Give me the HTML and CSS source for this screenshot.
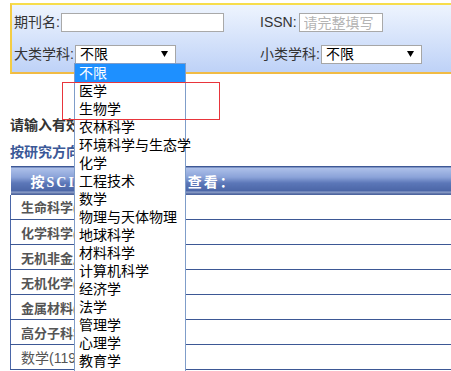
FILE: index.html
```html
<!DOCTYPE html>
<html lang="zh-CN">
<head>
    <meta charset="UTF-8" />
    <title>期刊查询</title>
    <link rel="stylesheet" href="styles.css">
</head>

<body>
    <main class="page">

        <section class="search-box">
            <div class="search-row">
                <div class="field field-wide">
                    <label>期刊名:</label>
                    <input type="text" class="txt txt-name" />
                </div>
                <div class="field">
                    <label>ISSN:</label>
                    <input type="text" class="txt txt-issn" placeholder="请完整填写" />
                </div>
            </div>
            <div class="search-row">
                <div class="field field-wide">
                    <label>大类学科:</label>
                    <div class="sel">
                        <span>不限</span>
                        <svg width="7" height="6" viewBox="0 0 7 6"><path d="M0 0h7L3.5 6z" fill="#000"/></svg>
                    </div>
                </div>
                <div class="field">
                    <label>小类学科:</label>
                    <div class="sel">
                        <span>不限</span>
                        <svg width="7" height="6" viewBox="0 0 7 6"><path d="M0 0h7L3.5 6z" fill="#000"/></svg>
                    </div>
                </div>
            </div>
        </section>

        <p class="tip">请输入有效期刊名</p>
        <p class="sub-title">按研究方向浏览</p>

        <table class="cat-table">
            <tr><th>按SCI学科类别分区表查看：</th></tr>
            <tr><td>生命科学(1520)</td></tr>
            <tr><td>化学科学(1340)</td></tr>
            <tr><td>无机非金属材料(312)</td></tr>
            <tr><td>无机化学(118)</td></tr>
            <tr><td>金属材料(205)</td></tr>
            <tr><td>高分子科学(167)</td></tr>
            <tr><td class="plain">数学(119)</td></tr>
        </table>

        <ul class="dropdown">
            <li class="on">不限</li>
            <li>医学</li>
            <li>生物学</li>
            <li>农林科学</li>
            <li>环境科学与生态学</li>
            <li>化学</li>
            <li>工程技术</li>
            <li>数学</li>
            <li>物理与天体物理</li>
            <li>地球科学</li>
            <li>材料科学</li>
            <li>计算机科学</li>
            <li>经济学</li>
            <li>法学</li>
            <li>管理学</li>
            <li>心理学</li>
            <li>教育学</li>
        </ul>

        <div class="mark"></div>

    </main>
</body>

</html>
```

FILE: styles.css
```css
* {
    box-sizing: border-box;
}

html,
body {
    margin: 0;
    height: 100%;
    overflow: hidden;
    background: #fff;
    font-family: "Liberation Sans", "Noto Sans CJK SC", sans-serif;
    font-size: 14px;
    color: #333;
}

.page {
    position: relative;
    height: 371px;
    overflow: hidden;
}

.search-box {
    margin: 3px -30px 0 10px;
    padding: 8px 0 8px 2px;
    border-top: 2px solid #f7dd4c;
    border-bottom: 2px solid #f1bb44;
    border-left: 2px solid #f4cd45;
    background: linear-gradient(#eef4fe, #bed2f7);
    display: flex;
    flex-direction: column;
    gap: 13px;
}

.search-row {
    display: flex;
    align-items: center;
    height: 19px;
}

.field {
    display: flex;
    align-items: center;
    gap: 1px;
}

.field-wide {
    width: 246px;
}

.field label {
    line-height: 19px;
    color: #333;
    white-space: nowrap;
}

.txt {
    height: 19px;
    margin: 0;
    padding: 0 4px;
    border: 1px solid #a9a9a9;
    background: #fff;
    font-family: inherit;
    font-size: 14px;
    outline: none;
}

.txt::placeholder {
    color: #b4b4b4;
}

.txt-name {
    width: 163px;
}

.txt-issn {
    width: 84px;
    margin-left: 1px;
}

.sel {
    width: 101px;
    height: 19px;
    border: 1px solid #a6a6a6;
    background: #fff;
    display: flex;
    align-items: center;
    justify-content: space-between;
    padding: 0 7px 0 4px;
    line-height: 17px;
    color: #000;
}

.sel svg {
    margin-top: -2px;
}

.tip {
    margin: 42px 0 0 10px;
    font-weight: bold;
    line-height: 18px;
    color: #333;
    white-space: nowrap;
}

.sub-title {
    margin: 9px 0 0 10px;
    font-weight: bold;
    line-height: 18px;
    color: #3b5998;
    white-space: nowrap;
}

.cat-table {
    margin: 5px 0 0 10px;
    width: 470px;
    border-collapse: collapse;
}

.cat-table th {
    height: 28px;
    padding: 0 0 0 20px;
    text-align: left;
    border-top: 1px solid #3d5895;
    background: linear-gradient(#afc2ea 0%, #8aa2d8 35%, #5c77b8 55%, #4b65a6 84%, #9fb0d6 88%, #54699f 93%, #4a62a0 100%);
    color: #fff;
    font-family: "Liberation Serif", "Noto Sans CJK SC", serif;
    font-size: 14px;
    font-weight: bold;
    letter-spacing: 2px;
    white-space: nowrap;
}

.cat-table td {
    height: 25px;
    padding: 0 0 0 10px;
    border-left: 1px solid #4a66a8;
    border-bottom: 1px solid #3d5895;
    font-size: 13px;
    font-weight: bold;
    color: #555;
    white-space: nowrap;
}

.cat-table td.plain {
    font-weight: normal;
    font-size: 14px;
}

.dropdown {
    position: absolute;
    left: 74px;
    top: 63px;
    width: 112px;
    height: 340px;
    margin: 0;
    padding: 0;
    list-style: none;
    background: #fff;
    border: 1px solid #7f9dc9;
}

.dropdown li {
    height: 18px;
    line-height: 18px;
    padding-left: 4px;
    color: #000;
    white-space: nowrap;
}

.dropdown li.on {
    background: #1e90ff;
    color: #fff;
}

.mark {
    position: absolute;
    left: 62px;
    top: 82px;
    width: 158px;
    height: 38px;
    border: 1px solid #e8353b;
}
```
